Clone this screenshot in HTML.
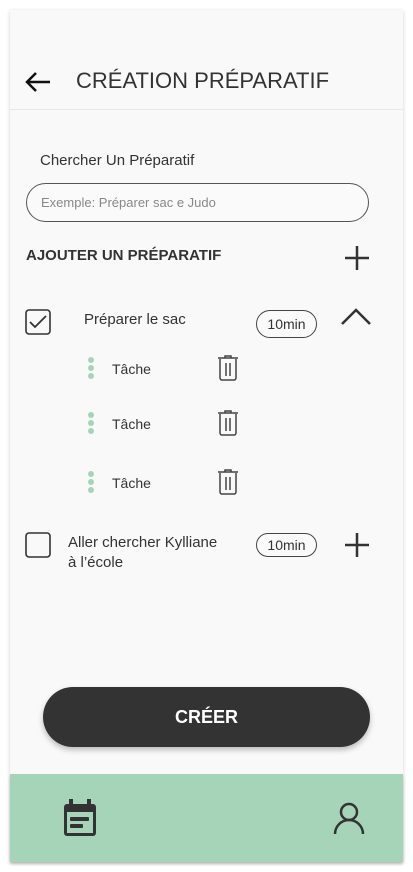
<!DOCTYPE html>
<html><head><meta charset="utf-8"><style>
*{margin:0;padding:0;box-sizing:border-box}
body{width:413px;height:872px;background:#fff;position:relative;font-family:"Liberation Sans",sans-serif;color:#333;overflow:hidden}
.card{position:absolute;left:10px;top:10px;width:393px;height:852px;background:#f9f9f9;box-shadow:0 1px 4px rgba(0,0,0,.18)}
.a{position:absolute}
.pill{position:absolute;border:1px solid #444;border-radius:14px;font-size:14px;text-align:center;background:#fafafa}
.dots{position:absolute;width:6px}
.dots i{display:block;width:6px;height:6px;border-radius:50%;background:#a6d4b9;margin-bottom:2px}
</style></head><body>
<div class="card"></div>
<svg class="a" style="left:24px;top:70px" width="28" height="24" viewBox="0 0 28 24"><path d="M26 12H3M12 3L3 12l9 9" stroke="#111" stroke-width="2.5" fill="none"/></svg>
<div class="a" style="left:76px;top:68px;font-size:22px;color:#333">CRÉATION PRÉPARATIF</div>
<div class="a" style="left:10px;top:109px;width:393px;height:1px;background:#e8e8e8"></div>
<div class="a" style="left:40px;top:152px;font-size:15px;color:#333">Chercher Un Préparatif</div>
<div class="a" style="left:26px;top:183px;width:343px;height:39px;border:1px solid #555;border-radius:20px;background:#fafafa"></div>
<div class="a" style="left:41px;top:195px;font-size:13px;color:#888">Exemple: Préparer sac e Judo</div>
<div class="a" style="left:26px;top:247px;font-size:15px;font-weight:bold;color:#333">AJOUTER UN PRÉPARATIF</div>
<svg class="a" style="left:344px;top:245px" width="26" height="26"><path d="M13 1v24M1 13h24" stroke="#333" stroke-width="2.5"/></svg>
<svg class="a" style="left:25px;top:309px" width="26" height="26"><rect x="1" y="1" width="24" height="24" rx="3" fill="none" stroke="#333" stroke-width="1.6"/><path d="M5 13l5 5 11-11" stroke="#333" stroke-width="1.8" fill="none"/></svg>
<div class="a" style="left:84px;top:311px;font-size:15px;color:#333">Préparer le sac</div>
<div class="pill" style="left:256px;top:310px;width:61px;height:28px;line-height:26px">10min</div>
<svg class="a" style="left:340px;top:307px" width="32" height="20"><path d="M2 17L16 3l14 14" stroke="#333" stroke-width="2.5" fill="none"/></svg>

<div class="dots" style="left:88px;top:357px"><i></i><i></i><i></i></div>
<div class="a" style="left:112px;top:361px;font-size:14px">Tâche</div>
<svg class="a" style="left:217px;top:355px" width="22" height="26"><path d="M1 3h20M8 3V1h6v2M3 4v19a2 2 0 002 2h12a2 2 0 002-2V4M9 8v13M13 8v13" stroke="#444" stroke-width="1.5" fill="none"/></svg>
<div class="dots" style="left:88px;top:412px"><i></i><i></i><i></i></div>
<div class="a" style="left:112px;top:416px;font-size:14px">Tâche</div>
<svg class="a" style="left:217px;top:410px" width="22" height="26"><path d="M1 3h20M8 3V1h6v2M3 4v19a2 2 0 002 2h12a2 2 0 002-2V4M9 8v13M13 8v13" stroke="#444" stroke-width="1.5" fill="none"/></svg>
<div class="dots" style="left:88px;top:471px"><i></i><i></i><i></i></div>
<div class="a" style="left:112px;top:475px;font-size:14px">Tâche</div>
<svg class="a" style="left:217px;top:469px" width="22" height="26"><path d="M1 3h20M8 3V1h6v2M3 4v19a2 2 0 002 2h12a2 2 0 002-2V4M9 8v13M13 8v13" stroke="#444" stroke-width="1.5" fill="none"/></svg>

<svg class="a" style="left:25px;top:532px" width="26" height="26"><rect x="1" y="1" width="24" height="24" rx="3" fill="none" stroke="#333" stroke-width="1.6"/></svg>
<div class="a" style="left:68px;top:533px;font-size:15px;line-height:20px;color:#333">Aller chercher Kylliane<br>à l’école</div>
<div class="pill" style="left:256px;top:533px;width:61px;height:24px;line-height:22px">10min</div>
<svg class="a" style="left:344px;top:532px" width="26" height="26"><path d="M13 1v24M1 13h24" stroke="#333" stroke-width="2.5"/></svg>

<div class="a" style="left:43px;top:687px;width:327px;height:60px;border-radius:30px;background:#333;box-shadow:0 3px 6px rgba(0,0,0,.25);color:#fff;font-size:18px;font-weight:bold;text-align:center;line-height:60px">CRÉER</div>
<div class="a" style="left:10px;top:774px;width:393px;height:88px;background:#a6d4b9;box-shadow:0 2px 3px rgba(0,0,0,.2)"></div>
<svg class="a" style="left:62px;top:799px" width="36" height="38" viewBox="0 0 36 38"><rect x="2" y="5" width="32" height="32" rx="3" fill="#333"/><rect x="7" y="0" width="4" height="7" fill="#333"/><rect x="25" y="0" width="4" height="7" fill="#333"/><rect x="5" y="13" width="26" height="21" fill="#a6d4b9"/><rect x="8" y="18" width="19" height="4" rx="1" fill="#333"/><rect x="8" y="25" width="13" height="4" rx="1" fill="#333"/></svg>
<svg class="a" style="left:333px;top:802px" width="32" height="32"><circle cx="16" cy="10" r="8" fill="none" stroke="#333" stroke-width="2.5"/><path d="M2 32a14 14 0 0128 0" fill="none" stroke="#333" stroke-width="2.5"/></svg>
</body></html>
